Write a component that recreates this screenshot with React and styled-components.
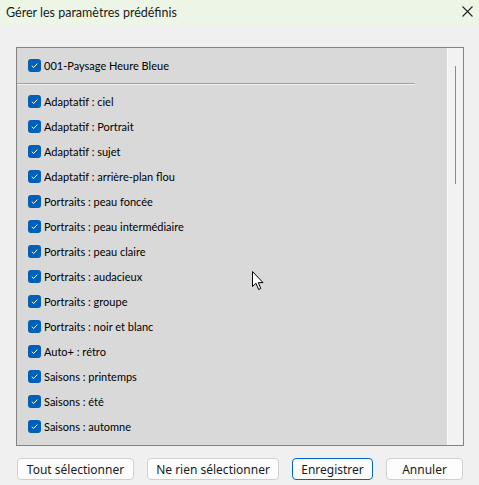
import React from "react";
import styled, { createGlobalStyle } from "styled-components";

const presets = [
  "Adaptatif : ciel",
  "Adaptatif : Portrait",
  "Adaptatif : sujet",
  "Adaptatif : arrière-plan flou",
  "Portraits : peau foncée",
  "Portraits : peau intermédiaire",
  "Portraits : peau claire",
  "Portraits : audacieux",
  "Portraits : groupe",
  "Portraits : noir et blanc",
  "Auto+ : rétro",
  "Saisons : printemps",
  "Saisons : été",
  "Saisons : automne",
];

function Check() {
  return (
    <Box>
      <svg width="9" height="9" viewBox="0 0 9 9">
        <path d="M1.8 4.7 L3.7 6.5 L7.3 2.6" fill="none" stroke="#fff" strokeWidth="1" />
      </svg>
    </Box>
  );
}

function Row({ label }) {
  return (
    <Item>
      <Check />
      <Label>{label}</Label>
    </Item>
  );
}

function App() {
  return (
    <>
      <Global />
      <Window>
        <TitleBar>
          <Title>Gérer les paramètres prédéfinis</Title>
          <Close>
            <svg width="11" height="11" viewBox="0 0 11 11">
              <path d="M0.5 0.5 L10.5 10.5 M10.5 0.5 L0.5 10.5" stroke="#222" strokeWidth="1.1" />
            </svg>
          </Close>
        </TitleBar>
        <Body>
          <ListBox>
            <ListPanel>
              <Row label="001-Paysage Heure Bleue" />
              <Separator />
              {presets.map((p) => (
                <Row key={p} label={p} />
              ))}
            </ListPanel>
            <ScrollTrack>
              <Thumb />
            </ScrollTrack>
          </ListBox>
          <Buttons>
            <Button w={117}>Tout sélectionner</Button>
            <Button w={132}>Ne rien sélectionner</Button>
            <Button w={81} primary>
              Enregistrer
            </Button>
            <Button w={77}>Annuler</Button>
          </Buttons>
        </Body>
        <Cursor>
          <svg width="13" height="20" viewBox="0 0 13 20">
            <path
              d="M0.5 0.5 L0.5 15.5 L4 12.3 L6.6 18.5 L8.8 17.5 L6.3 11.6 L11 11.6 Z"
              fill="#fff"
              stroke="#000"
              strokeWidth="1"
              strokeLinejoin="round"
            />
          </svg>
        </Cursor>
      </Window>
    </>
  );
}

export default App;

const Global = createGlobalStyle`
  body {
    margin: 0;
    font-family: "Lato", "Noto Sans", sans-serif;
  }
`;

const Window = styled.div`
  position: relative;
  width: 479px;
  height: 485px;
  background: #f0f0f0;
  display: flex;
  flex-direction: column;
  overflow: hidden;
`;

const TitleBar = styled.div`
  height: 25px;
  background: #edf6e6;
  display: flex;
  align-items: center;
  justify-content: space-between;
  padding: 0 6px 1px 6px;
`;

const Title = styled.div`
  font-family: "Lato", sans-serif;
  font-size: 12.5px;
  color: #1a1a1a;
`;

const Close = styled.div`
  display: flex;
  margin-top: -3px;
`;

const Body = styled.div`
  flex: 1;
  padding: 21px 15px 0 16px;
  display: flex;
  flex-direction: column;
`;

const ListBox = styled.div`
  height: 397px;
  border: 1px solid #828282;
  display: flex;
  overflow: hidden;
`;

const ListPanel = styled.div`
  box-sizing: border-box;
  width: 430px;
  flex-shrink: 0;
  background: #d9d9d9;
  padding: 5px 0 0 11px;
  overflow: hidden;
`;

const Item = styled.div`
  height: 25px;
  display: flex;
  align-items: center;
  gap: 3px;
`;

const Box = styled.div`
  width: 13px;
  height: 13px;
  border-radius: 3px;
  background: #005fb8;
  display: flex;
  align-items: center;
  justify-content: center;
`;

const Label = styled.span`
  font-family: "Lato", sans-serif;
  font-size: 11px;
  color: #000;
`;

const Separator = styled.div`
  margin: 5px 0 4px -11px;
  width: 398px;
  height: 1px;
  background: #a0a0a0;
  border-bottom: 1px solid #f4f4f4;
`;

const ScrollTrack = styled.div`
  flex: 1;
  background: #f2f2f2;
  border-left: 1px solid #fafafa;
  padding-top: 18px;
  display: flex;
  justify-content: center;
`;

const Thumb = styled.div`
  width: 1px;
  height: 118px;
  background: #8a8a8a;
`;

const Buttons = styled.div`
  margin-top: 12px;
  display: flex;
  gap: 13px;
  padding-left: 1px;
`;

const Button = styled.button`
  width: ${(p) => p.w}px;
  height: 22px;
  background: #fdfdfd;
  border: 1px solid ${(p) => (p.primary ? "#0067c0" : "#d0d0d0")};
  border-radius: 4px;
  font-family: "Noto Sans", "Open Sans", sans-serif;
  font-size: 12px;
  color: #1a1a1a;
  padding: 0;
  display: flex;
  align-items: center;
  justify-content: center;
`;

const Cursor = styled.div`
  position: absolute;
  left: 252px;
  top: 271px;
  line-height: 0;
`;
